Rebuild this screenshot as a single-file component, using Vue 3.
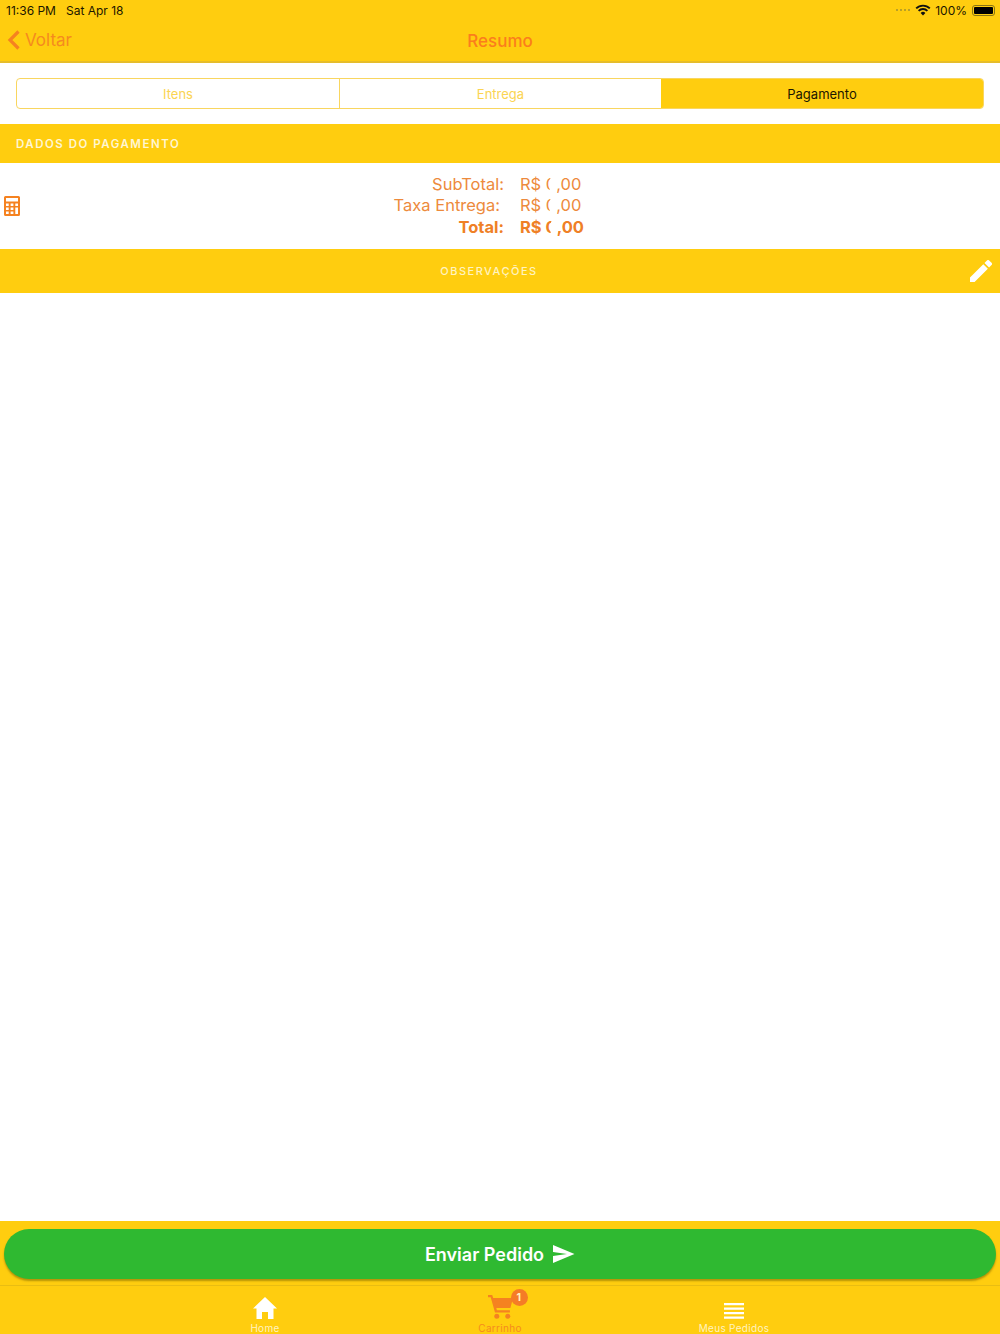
<script setup>
const rows = [
  { label: 'SubTotal:', cls: '' },
  { label: 'Taxa Entrega:', cls: 'indent' },
  { label: 'Total:', cls: 'strong' },
]
const tabs = [
  { label: 'Itens', active: false },
  { label: 'Entrega', active: false },
  { label: 'Pagamento', active: true },
]
</script>

<template>
  <div class="page">
    <header class="top">
      <div class="status">
        <span class="status-left"><span>11:36 PM</span><span>Sat Apr 18</span></span>
        <span class="status-right">
          <span class="dots"><i></i><i></i><i></i><i></i></span>
          <svg class="wifi" width="16" height="12" viewBox="0 0 16 12">
            <path d="M8 11.5 5.6 8.9a3.4 3.4 0 0 1 4.8 0z" fill="#111" />
            <path d="M3.6 6.9a6.2 6.2 0 0 1 8.8 0M1.2 4.4a9.6 9.6 0 0 1 13.6 0" fill="none" stroke="#111" stroke-width="1.9" />
          </svg>
          <span>100%</span>
          <span class="battery"><b></b></span>
        </span>
      </div>
      <div class="nav">
        <span class="back">
          <svg width="14" height="20" viewBox="0 0 14 20"><path d="M11.5 1.5 3 10l8.500 8.500" fill="none" stroke="#f58220" stroke-width="3.200" /></svg>
          Voltar
        </span>
        <span class="title">Resumo</span>
      </div>
    </header>

    <div class="segment-wrap">
      <div class="segment">
        <div v-for="t in tabs" :key="t.label" class="seg" :class="{ on: t.active }">{{ t.label }}</div>
      </div>
    </div>

    <div class="section">DADOS DO PAGAMENTO</div>

    <div class="totals">
      <svg class="calc" width="16" height="20" viewBox="0 0 16 20">
        <path fill="#f58220" fill-rule="evenodd" d="M1.500 0h13A1.500 1.500 0 0 1 16 1.500v17a1.500 1.500 0 0 1-1.500 1.500h-13A1.500 1.500 0 0 1 0 18.500v-17A1.500 1.500 0 0 1 1.500 0ZM2 2v3.500h12V2ZM2 7.500V10h2.700V7.500Zm4.600 0V10h2.800V7.500Zm4.700 0V10H14V7.500ZM2 11.500V14h2.700v-2.500Zm4.600 0V14h2.800v-2.500Zm4.700 0V18H14v-6.500ZM2 15.500V18h2.700v-2.500Zm4.600 0V18h2.800v-2.500Z" />
      </svg>
      <div class="rows">
        <div v-for="r in rows" :key="r.label" class="row" :class="r.cls">
          <span class="label">{{ r.label }}</span>
          <span class="value">R$ <span class="digit">0</span>,00</span>
        </div>
      </div>
    </div>

    <div class="obs">
      <span>OBSERVAÇÕES</span>
      <svg class="pencil" width="22" height="22" viewBox="0 0 24 24">
        <path fill="#fff" d="M0 24v-5L14.500 4.500l5 5L5 24ZM15.800 3.200 18.500.5a1.700 1.700 0 0 1 2.400 0l2.600 2.600a1.700 1.700 0 0 1 0 2.400l-2.700 2.700Z" />
      </svg>
    </div>

    <main class="blank"></main>

    <div class="send-bar">
      <button class="send">
        Enviar Pedido
        <svg width="22" height="18" viewBox="0 0 22 18"><path fill="#fff" d="M0 0 21.500 9 0 18v-7l14-2-14-2Z" /></svg>
      </button>
    </div>

    <nav class="tabbar">
      <div class="tab">
        <svg width="24" height="22" viewBox="0 0 24 22"><path fill="#fff" d="M12 0 24 11.500h-3.500V22H15v-7H9v7H3.500V11.500H0Z" /></svg>
        <span>Home</span>
      </div>
      <div class="tab cart">
        <span class="icon-wrap">
          <svg width="25" height="24" viewBox="0 0 25 24">
            <path fill="#f58220" d="M0 0h4.200l1 3H25l-2.600 10H8.300l.6 2.200h13V17.500H7L2.700 2.300H0Z" />
            <circle cx="8.800" cy="21.300" r="2.500" fill="#f58220" />
            <circle cx="19.800" cy="21.300" r="2.500" fill="#f58220" />
          </svg>
          <b class="badge">1</b>
        </span>
        <span class="orange">Carrinho</span>
      </div>
      <div class="tab">
        <svg width="20" height="16" viewBox="0 0 20 16"><path fill="#fff" d="M0 0h20v2.300H0zM0 4.500h20v2.300H0zM0 9h20v2.300H0zM0 13.500h20v2.300H0z" /></svg>
        <span>Meus Pedidos</span>
      </div>
    </nav>
  </div>
</template>

<style scoped>
.page {
  height: 1334px;
  display: flex;
  flex-direction: column;
  overflow: hidden;
  background: #fff;
  font-family: Inter, "Liberation Sans", sans-serif;
  color: #f58220;
}
.top {
  background: #ffcd0f;
  border-bottom: 2px solid #e6bd2a;
  height: 63px;
  box-sizing: border-box;
}
.status {
  height: 20px;
  display: flex;
  align-items: center;
  justify-content: space-between;
  padding: 0 5px 0 6px;
  font-size: 12px;
  color: #1c1600;
}
.status-left { display: flex; gap: 10px; }
.status-right { display: flex; align-items: center; gap: 4px; }
.dots { display: flex; gap: 1.500px; margin-right: 1px; }
.dots i { width: 2.500px; height: 2.500px; border-radius: 50%; background: #a3902f; }
.battery {
  width: 23px;
  height: 11px;
  box-sizing: border-box;
  border: 1px solid #8a7414;
  border-radius: 3px;
  padding: 1px;
  display: flex;
  margin-left: 1px;
}
.battery b { flex: 1; background: #000; border-radius: 1px; }
.nav {
  height: 41px;
  display: flex;
  align-items: center;
  justify-content: center;
  position: relative;
}
.back {
  position: absolute;
  left: 7px;
  top: 10px;
  display: flex;
  align-items: center;
  gap: 4px;
  font-size: 17px;
  color: #f58a1f;
}
.title { font-size: 17px; font-weight: 500; color: #fb7d1c; }
.segment-wrap { padding: 15px 16px; }
.segment {
  display: grid;
  grid-template-columns: 1fr 1fr 1fr;
  height: 31px;
  box-sizing: border-box;
  border: 1px solid #f9d660;
  border-radius: 4px;
  overflow: hidden;
}
.seg {
  display: flex;
  align-items: center;
  justify-content: center;
  font-size: 13px;
  color: #fbd452;
  border-left: 1px solid #f9d660;
}
.seg:first-child { border-left: 0; }
.seg.on { background: #ffcd0f; color: #1c1600; border-left: 0; }
.section {
  height: 39px;
  background: #ffcd0f;
  display: flex;
  align-items: center;
  padding-left: 16px;
  font-size: 11.500px;
  font-weight: 600;
  letter-spacing: 1.500px;
  color: #fff6d2;
}
.totals {
  height: 86px;
  display: flex;
  align-items: center;
  justify-content: center;
  position: relative;
}
.calc { position: absolute; left: 4px; top: 33px; }
.rows { display: flex; flex-direction: column; margin-left: 0; }
.row {
  display: flex;
  height: 21.500px;
  line-height: 21.500px;
  font-size: 16.500px;
  color: #ed8a3c;
}
.label { width: 504px; box-sizing: border-box; text-align: right; }
.value { padding-left: 16px; width: 496px; box-sizing: border-box; }
.indent .label { padding-right: 4px; }
.strong { font-weight: 700; color: #ef8026; }
.digit { position: relative; display: inline-block; }
.digit::after {
  content: "";
  position: absolute;
  right: -1px;
  top: 2px;
  width: 8px;
  height: 18px;
  background: #fff;
  border-radius: 50%;
}
.obs {
  height: 44px;
  background: #ffcd0f;
  display: flex;
  align-items: center;
  justify-content: center;
  position: relative;
  padding-right: 22px;
  font-size: 11px;
  font-weight: 500;
  letter-spacing: 1.500px;
  color: #fff3c0;
}
.pencil { position: absolute; right: 8px; top: 11px; }
.blank { flex: 1; }
.send-bar {
  background: #ffcd0f;
  height: 65px;
  box-sizing: border-box;
  padding: 8px 4px 0;
  border-bottom: 1px solid #e9bd12;
}
.send {
  width: 100%;
  height: 50px;
  border: 0;
  border-radius: 25px;
  background: #2fb931;
  box-shadow: 0 2px 2px rgba(120, 100, 0, 0.55);
  color: #fff;
  font-family: inherit;
  font-size: 18px;
  font-weight: 600;
  display: flex;
  align-items: center;
  justify-content: center;
  gap: 9px;
}
.tabbar {
  flex: none;
  height: 48px;
  background: #ffcd0f;
  display: grid;
  grid-template-columns: 265px 1fr 266px;
  padding: 0;
  position: relative;
}
.tab {
  position: absolute;
  top: 6px;
  display: flex;
  flex-direction: column;
  align-items: center;
  width: 120px;
  height: 42px;
  justify-content: flex-end;
  gap: 3px;
  font-size: 10px;
  letter-spacing: 0.300px;
  color: #fff3c0;
  line-height: 12px;
  overflow: visible;
  transform: translateX(-50%);
}
.tab:nth-child(1) { left: 265px; }
.tab:nth-child(2) { left: 500px; }
.tab:nth-child(3) { left: 734px; }
.orange { color: #f58a1f; }
.icon-wrap { position: relative; display: block; height: 24px; }
.badge {
  position: absolute;
  left: 23px;
  top: -6px;
  width: 17px;
  height: 17px;
  border-radius: 50%;
  background: #f57c26;
  color: #fff3c0;
  font-size: 10.500px;
  line-height: 17px;
  text-align: center;
  font-weight: 700;
}
</style>
